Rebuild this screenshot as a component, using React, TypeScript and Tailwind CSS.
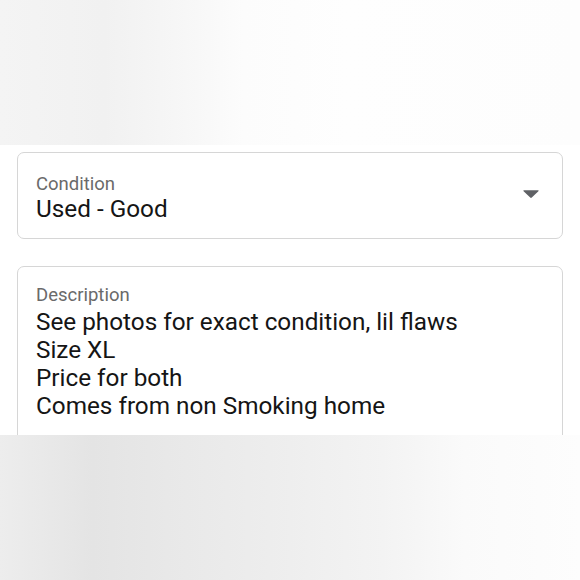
import React from "react";

export default function App() {
  return (
    <div
      className="w-[580px] h-[580px] overflow-hidden flex flex-col bg-white"
      style={{ fontFamily: "Roboto, 'Noto Sans', sans-serif" }}
    >
      <div className="h-[145px] shrink-0 bg-[linear-gradient(90deg,#f4f4f4_0%,#f1f1f1_18%,#f6f6f6_30%,#fcfcfc_42%,#fefefe_60%,#fdfdfd_100%)]" />
      <div className="h-[290px] shrink-0 bg-white px-[17px] pt-[7px] flex flex-col gap-[27px] overflow-hidden">
        <div className="h-[87px] shrink-0 rounded-[7px] border border-[#d6d6d6] pl-[18px] pr-[22px] flex items-center">
          <div className="flex-1 flex flex-col pt-[4px]">
            <div className="text-[18.5px] leading-[22px] text-[#6a6a6a]">Condition</div>
            <div className="text-[24.3px] leading-[28px] text-[#151515]">Used - Good</div>
          </div>
          <svg width="18" height="10" viewBox="0 0 18 10" className="mb-[3px]">
            <path d="M2 1.2 L16 1.2 Q17.2 1.2 16.4 2.2 L9.8 8.6 Q9 9.4 8.2 8.6 L1.6 2.2 Q0.8 1.2 2 1.2 Z" fill="#5f6165" />
          </svg>
        </div>
        <div className="h-[200px] shrink-0 rounded-t-[7px] border border-[#d6d6d6] pl-[18px] pt-[17px]">
          <div className="text-[18.5px] leading-[22px] text-[#6a6a6a]">Description</div>
          <div className="text-[24.3px] leading-[28px] text-[#151515] pt-[2px]">
            <div>See photos for exact condition, lil flaws</div>
            <div>Size XL</div>
            <div>Price for both</div>
            <div>Comes from non Smoking home</div>
          </div>
        </div>
      </div>
      <div className="h-[145px] shrink-0 bg-[linear-gradient(90deg,#ededed_0%,#e4e4e4_16%,#e9e9e9_32%,#eeeeee_50%,#f3f3f3_66%,#fafafa_80%,#fdfdfd_100%)]" />
    </div>
  );
}
